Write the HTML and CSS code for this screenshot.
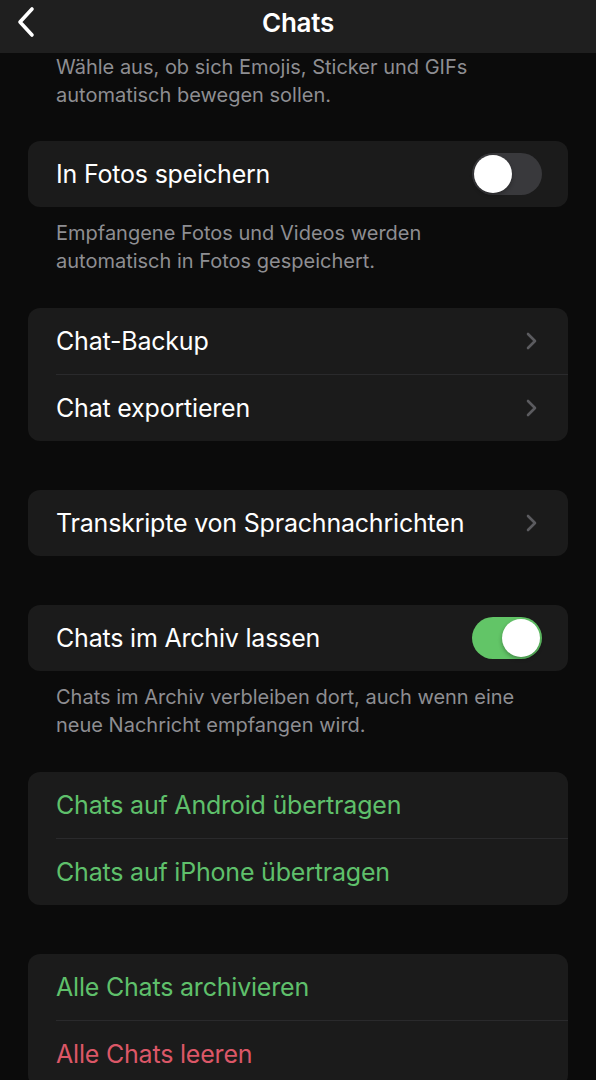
FILE: index.html
```html
<!DOCTYPE html>
<html lang="de">
<head>
    <meta charset="UTF-8">
    <meta name="viewport" content="width=device-width, initial-scale=1.0">
    <title>Chats</title>
    <link rel="stylesheet" href="styles.css">
</head>
<body>
    <div class="navbar">
        <a href="#" class="back" aria-label="Zurück">
            <svg width="20" height="32" viewBox="0 0 20 32">
                <path d="M16 3 L4 16 L16 29" fill="none" stroke="#fff" stroke-width="3.6" stroke-linecap="round" stroke-linejoin="round"/>
            </svg>
        </a>
        <h1 class="title">Chats</h1>
    </div>

    <div class="content">
        <p class="note first">Wähle aus, ob sich Emojis, Sticker und GIFs automatisch bewegen sollen.</p>

        <div class="group">
            <div class="row">
                <span class="label">In Fotos speichern</span>
                <span class="switch"><span class="knob"></span></span>
            </div>
        </div>
        <p class="note">Empfangene Fotos und Videos werden automatisch in Fotos gespeichert.</p>

        <div class="group">
            <div class="row">
                <span class="label">Chat-Backup</span>
                <span class="chevron"><svg width="14" height="20" viewBox="0 0 14 20"><path d="M3 3 L10 10 L3 17" fill="none" stroke="#5b5b5f" stroke-width="2.6" stroke-linecap="round" stroke-linejoin="round"/></svg></span>
            </div>
            <div class="row">
                <span class="label">Chat exportieren</span>
                <span class="chevron"><svg width="14" height="20" viewBox="0 0 14 20"><path d="M3 3 L10 10 L3 17" fill="none" stroke="#5b5b5f" stroke-width="2.6" stroke-linecap="round" stroke-linejoin="round"/></svg></span>
            </div>
        </div>

        <div class="group">
            <div class="row">
                <span class="label">Transkripte von Sprachnachrichten</span>
                <span class="chevron"><svg width="14" height="20" viewBox="0 0 14 20"><path d="M3 3 L10 10 L3 17" fill="none" stroke="#5b5b5f" stroke-width="2.6" stroke-linecap="round" stroke-linejoin="round"/></svg></span>
            </div>
        </div>

        <div class="group">
            <div class="row">
                <span class="label">Chats im Archiv lassen</span>
                <span class="switch on"><span class="knob"></span></span>
            </div>
        </div>
        <p class="note">Chats im Archiv verbleiben dort, auch wenn eine neue Nachricht empfangen wird.</p>

        <div class="group">
            <div class="row">
                <span class="label green">Chats auf Android übertragen</span>
            </div>
            <div class="row">
                <span class="label green">Chats auf iPhone übertragen</span>
            </div>
        </div>

        <div class="group">
            <div class="row">
                <span class="label green">Alle Chats archivieren</span>
            </div>
            <div class="row">
                <span class="label red">Alle Chats leeren</span>
            </div>
        </div>
    </div>
</body>
</html>
```

FILE: styles.css
```css
body {
    margin: 0;
    background-color: #0b0b0b;
    font-family: 'Inter', 'Roboto', sans-serif;
    color: #fff;
    height: 1080px;
    overflow: hidden;
}

.navbar {
    height: 53px;
    background-color: #1f1f1f;
    display: flex;
    align-items: center;
    justify-content: center;
    position: relative;
}

.back {
    position: absolute;
    left: 16px;
    top: 6px;
    display: flex;
}

.title {
    margin: 0;
    font-size: 26px;
    font-weight: 600;
    letter-spacing: -0.3px;
    margin-top: -8px;
}

.content {
    padding: 0 28px;
}

.note {
    margin: 0;
    padding: 12px 42px 0 28px;
    font-size: 20px;
    line-height: 28px;
    color: #8e8e92;
}

.note.first {
    padding-top: 0;
}

.group {
    margin-top: 49px;
    background-color: #1b1b1b;
    border-radius: 12px;
    overflow: hidden;
}

.note + .group {
    margin-top: 33px;
}

.note.first + .group {
    margin-top: 32px;
}

.row {
    height: 66px;
    display: flex;
    align-items: center;
    justify-content: space-between;
    margin-left: 28px;
    padding-right: 27px;
}

.row + .row {
    border-top: 1px solid #2a2a2c;
}

.label {
    font-size: 25px;
    letter-spacing: -0.2px;
}

.green {
    color: #5fc06b;
}

.red {
    color: #dc5767;
}

.chevron {
    display: flex;
    margin-right: 2px;
}

/* toggle switch */
.switch {
    width: 70px;
    height: 42px;
    border-radius: 21px;
    background-color: #39393c;
    display: flex;
    align-items: center;
    padding: 0 2px;
    box-sizing: border-box;
    margin-right: -1px;
}

.switch.on {
    background-color: #62c567;
    justify-content: flex-end;
}

.knob {
    width: 38px;
    height: 38px;
    border-radius: 50%;
    background-color: #fff;
    box-shadow: 0 2px 4px rgba(0, 0, 0, 0.3);
}
```
